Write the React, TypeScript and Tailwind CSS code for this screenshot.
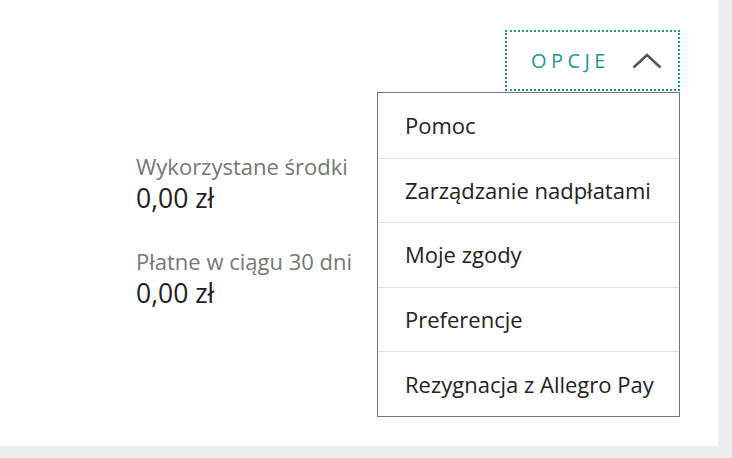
import React from 'react';

const menuItems = [
  'Pomoc',
  'Zarządzanie nadpłatami',
  'Moje zgody',
  'Preferencje',
  'Rezygnacja z Allegro Pay',
];

function ChevronUp() {
  return (
    <svg width="30" height="16" viewBox="0 0 30 16" fill="none">
      <polyline points="1.5,14.5 15,2 28.5,14.5" stroke="#555555" strokeWidth="2.6" />
    </svg>
  );
}

export default function App() {
  return (
    <div className="w-[732px] h-[458px] bg-[#eceff2] font-['Open_Sans',sans-serif]">
      <div className="w-[718px] h-[446px] bg-white flex">
        {/* left summary */}
        <div className="pl-[136px] pt-[151px] w-[377px] shrink-0">
          <div className="text-[22px] leading-[30px] text-[#767676]">Wykorzystane środki</div>
          <div className="text-[26.5px] leading-[34px] text-[#222222]">0,00 zł</div>
          <div className="mt-[31px] text-[22px] leading-[30px] text-[#767676]">Płatne w ciągu 30 dni</div>
          <div className="text-[26.5px] leading-[34px] text-[#222222]">0,00 zł</div>
        </div>

        {/* options */}
        <div className="flex-1 pt-[30px] pr-[38px] flex justify-end">
          <div className="relative">
            <button className="w-[175px] h-[61px] border-2 border-dotted border-[#1a9a89] flex items-center pl-[24px] pr-[16px] justify-between">
              <span className="text-[20px] tracking-[0.22em] text-[#1a9a89]">OPCJE</span>
              <ChevronUp />
            </button>
            <div className="absolute right-0 top-[62px] w-[303px] bg-white border border-[#767676]">
              {menuItems.map((item, i) => (
                <div
                  key={item}
                  className={`h-[64.6px] flex items-center pl-[27px] text-[22px] text-[#222222] ${
                    i > 0 ? 'border-t border-[#e0e0e0]' : ''
                  }`}
                >
                  {item}
                </div>
              ))}
            </div>
          </div>
        </div>
      </div>
    </div>
  );
}
